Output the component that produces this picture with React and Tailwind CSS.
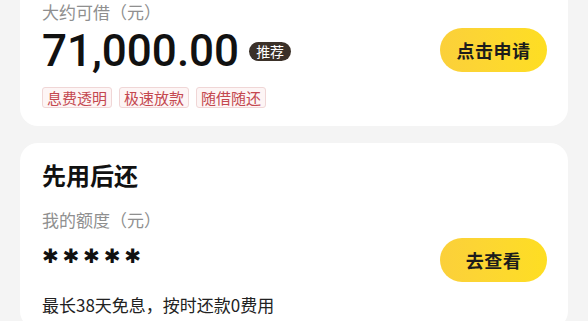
import React from 'react';

const cjk = { fontFamily: '"Noto Sans CJK SC", "Noto Sans", sans-serif' };

const tags = ['息费透明', '极速放款', '随借随还'];

function YellowButton({ children }) {
    return (
        <button
            className="w-[107px] h-[44px] rounded-full bg-gradient-to-r from-[#fbd03a] to-[#fede22] text-[18px] font-bold text-[#1c1c1c] leading-none tracking-[0.5px]"
            style={cjk}
        >
            {children}
        </button>
    );
}

export default function App() {
    return (
        <div className="w-[588px] h-[321px] overflow-hidden bg-[#f4f4f4] px-[20px]" style={cjk}>
            {/* loan card */}
            <div className="bg-white rounded-b-[18px] pl-[22px] pr-[21px] pb-[18px] flex items-start justify-between">
                <div className="flex flex-col">
                    <div className="text-[17px] leading-[22px] text-[#8f8f8f] pt-[1px]">大约可借（元）</div>
                    <div className="mt-[2px] h-[48px] flex items-center">
                        <span
                            className="text-[44px] leading-[48px] font-medium text-[#111] mt-[4px]"
                            style={{ fontFamily: 'Roboto, "Liberation Sans", sans-serif' }}
                        >
                            71,000.00
                        </span>
                        <span className="ml-[10px] mt-[4px] h-[19px] px-[7px] rounded-full bg-[#3b3129] text-white text-[14px] leading-[19px]">推荐</span>
                    </div>
                    <div className="mt-[14px] flex gap-[7px]">
                        {tags.map(t => (
                            <span key={t} className="h-[21px] px-[4px] rounded-[3px] border border-[#f0d6d6] bg-[#fdf5f5] text-[#c4474f] text-[15px] leading-[19px]">
                                {t}
                            </span>
                        ))}
                    </div>
                </div>
                <div className="mt-[28px]">
                    <YellowButton>点击申请</YellowButton>
                </div>
            </div>

            {/* pay later card */}
            <div className="mt-[17px] bg-white rounded-[18px] pl-[22px] pr-[21px] pt-[16px] pb-[12px] flex flex-col">
                <div className="text-[24px] leading-[32px] font-bold text-[#111]">先用后还</div>
                <div className="mt-[17px] text-[17px] leading-[24px] text-[#8f8f8f]">我的额度（元）</div>
                <div className="mt-[6px] h-[44px] flex items-center justify-between">
                    <span
                        className="mb-[9px] text-[20px] leading-none tracking-[3.8px] text-[#111]"
                        style={{ fontFamily: '"DejaVu Sans", sans-serif' }}
                    >
                        ✱✱✱✱✱
                    </span>
                    <YellowButton>去查看</YellowButton>
                </div>
                <div className="mt-[11px] text-[17px] leading-[24px] text-[#222]">最长38天免息，按时还款0费用</div>
            </div>
        </div>
    );
}
